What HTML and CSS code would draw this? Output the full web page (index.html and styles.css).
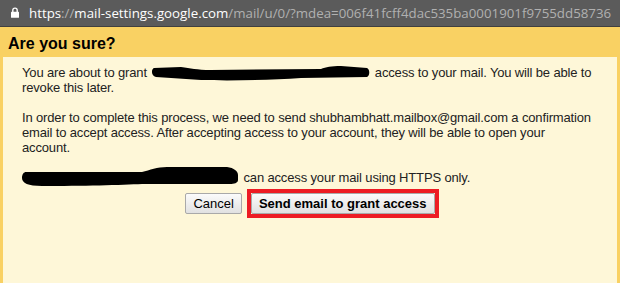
FILE: index.html
```html
<!DOCTYPE html>
<html>
<head>
<meta charset="utf-8">
<link rel="stylesheet" href="styles.css">
</head>
<body>
<div class="urlbar">
  <svg class="lock" width="8" height="11" viewBox="0 0 8 11"><path d="M1.8 5V3.3a2.2 2.2 0 0 1 4.4 0V5" fill="none" stroke="#fff" stroke-width="1.4"/><rect x="0" y="4.8" width="8" height="6" rx="0.6" fill="#fff"/></svg>
  <span class="url"><span class="scheme">https</span><span class="sep">://</span><span class="host">mail-settings.google.com</span><span class="path">/mail/u/0/?mdea=006f41fcff4dac535ba0001901f9755dd58736</span></span>
</div>
<div class="frame">
  <div class="header">Are you sure?</div>
  <div class="content">
    <p>You are about to grant <svg class="redact r1" width="221" height="14" viewBox="0 0 221 14" overflow="visible"><path d="M4,2 L31,1 C41,2 46,4 61,4 L171,3 C176,1 181,0 191,0 L217,2 C220,3 220,10 217,11 L151,12 C121,14 81,15 51,14 L6,11 C1,10 1,3 4,2 Z" fill="#000"/></svg> access to your mail. You will be able to revoke this later.</p>
    <p>In order to complete this process, we need to send shubhambhatt.mailbox@gmail.com a confirmation email to accept access. After accepting access to your account, they will be able to open your account.</p>
    <p><svg class="redact r2" width="218" height="14" viewBox="0 0 218 14" overflow="visible"><path d="M4,1 L120,1 C128,-1 135,-4 145,-4 L205,-4 C212,-3 216,0 216,4 L216,9 C216,12 212,13 208,13 L120,13 C100,14 60,15 20,15 C6,15 0,12 0,7 C0,3 2,1 4,1 Z" fill="#000"/></svg> can access your mail using HTTPS only.</p>
    <div class="actions">
      <button class="btn">Cancel</button>
      <span class="highlight"><button class="btn primary">Send email to grant access</button></span>
    </div>
  </div>
</div>
</body>
</html>
```
FILE: styles.css
```css
html, body {
  margin: 0;
  padding: 0;
  width: 620px;
  height: 283px;
  overflow: hidden;
}
body {
  display: flex;
  flex-direction: column;
  font-family: "Liberation Sans", Arial, sans-serif;
}
.urlbar {
  height: 26px;
  flex: none;
  background: #5b5b5b;
  border-bottom: 1px solid #404040;
  display: flex;
  align-items: center;
  padding-left: 11px;
  gap: 10px;
  white-space: nowrap;
  overflow: hidden;
}
.lock {
  flex: none;
  margin-top: -1px;
}
.url {
  font-family: "Open Sans", "Noto Sans", sans-serif;
  font-size: 13.3px;
  color: #b5b5b5;
  margin-top: -1px;
}
.scheme, .host {
  color: #ffffff;
}
.sep, .path {
  color: #b0b0b0;
}
.frame {
  flex: 1;
  background: #f9d163;
  padding: 0 3px;
  display: flex;
  flex-direction: column;
}
.header {
  height: 22px;
  padding: 8px 0 0 5px;
  font-size: 16px;
  font-weight: bold;
  line-height: 18px;
  color: #000;
}
.content {
  flex: 1;
  background: #fef7d8;
  padding: 8px 23px 0 19px;
  font-size: 13px;
  line-height: 15px;
  letter-spacing: -0.15px;
  color: #222;
}
.content p {
  margin: 0 0 15px 0;
}
.content p:last-of-type {
  margin-bottom: 8px;
}
.redact {
  vertical-align: -3px;
}
.actions {
  display: flex;
  justify-content: center;
  align-items: center;
  gap: 5px;
  padding-left: 8px;
  margin-top: -4px;
}
.highlight {
  display: flex;
  border: 4px solid #ed1c24;
}
.btn {
  height: 21px;
  padding: 0 7px;
  font-family: "Liberation Sans", Arial, sans-serif;
  font-size: 13px;
  color: #000;
  border: 1px solid #a9a9a9;
  border-radius: 2px;
  background: linear-gradient(#fbfbfb, #e1e1e1);
}
.btn.primary {
  font-weight: bold;
}
```
